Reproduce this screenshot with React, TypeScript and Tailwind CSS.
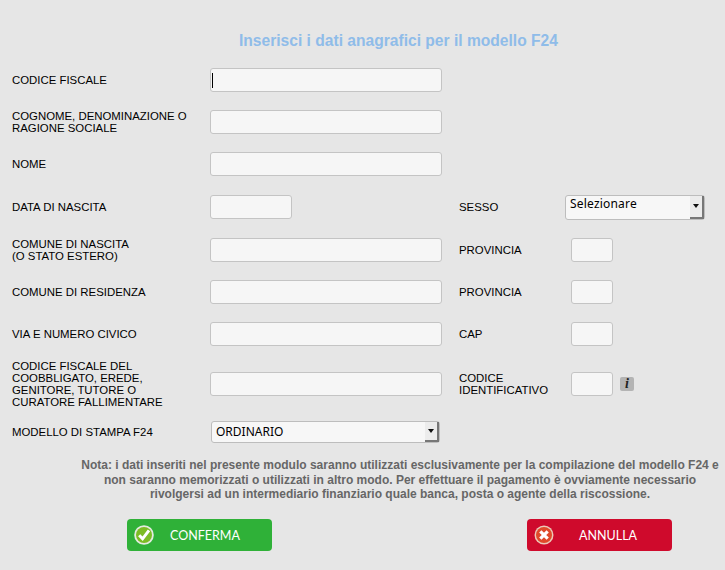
const Label = ({ children, className = "" }: { children: React.ReactNode; className?: string }) => (
  <div className={"text-[11.4px] leading-[12px] text-black " + className}>{children}</div>
);

const Field = ({ width }: { width: string }) => (
  <div className={"h-6 rounded-[3px] border border-[#c4c4c4] bg-[#f6f6f6] " + width} />
);

const SelectBox = ({ text, className, textClass }: { text: string; className: string; textClass: string }) => (
  <div className={"flex rounded-[3px] border border-[#bdbdbd] bg-[#f7f7f7] " + className}>
    <span className={"flex-1 pl-1 text-black font-['Noto_Sans','DejaVu_Sans',sans-serif] " + textClass}>{text}</span>
    <span className="flex w-3.5 items-center justify-center border-r-2 border-b-2 border-[#777] bg-[#ececec]">
      <svg width="6" height="4" viewBox="0 0 6 4"><path d="M0 0h6L3 4z" fill="#111" /></svg>
    </span>
  </div>
);

const Row = ({
  label,
  main = "w-[232px]",
  className = "",
  children,
}: {
  label: React.ReactNode;
  main?: string;
  className?: string;
  children?: React.ReactNode;
}) => (
  <div className={"flex h-6 items-center " + className}>
    <Label className="w-[198px] shrink-0">{label}</Label>
    <Field width={main} />
    {children}
  </div>
);

const Side = ({ label, info }: { label: React.ReactNode; info?: boolean }) => (
  <div className="flex items-center">
    <Label className="ml-[17px] w-[112px]">{label}</Label>
    <Field width="w-[42px]" />
    {info && (
      <span className="ml-[7px] flex h-[14px] w-[14px] items-center justify-center rounded-[2px] bg-[#b4b4b4] font-['Liberation_Serif',serif] text-[14px] font-bold italic leading-none text-[#222]">
        i
      </span>
    )}
  </div>
);

export default function App() {
  return (
    <div className="h-[570px] w-[725px] overflow-hidden bg-[#e6e6e6] font-['Liberation_Sans',Arial,sans-serif]">
      <h1 className="pt-[32px] pl-[239px] text-[15.6px] font-bold leading-[18px] text-[#8fbce9]">
        Inserisci i dati anagrafici per il modello F24
      </h1>
      <div className="pl-3">
        <div className="relative mt-[18px] flex h-6 items-center">
          <Label className="w-[198px] shrink-0">CODICE FISCALE</Label>
          <Field width="w-[232px]" />
          <span className="absolute left-[200px] top-[5px] h-[15px] w-px bg-black" />
        </div>
        <Row className="mt-[18px]" label={<>COGNOME, DENOMINAZIONE O<br />RAGIONE SOCIALE</>} />
        <Row className="mt-[18px]" label="NOME" />
        <Row className="mt-[19px]" label="DATA DI NASCITA" main="w-[82px]">
          <Label className="ml-[167px] w-[106px]">SESSO</Label>
          <SelectBox text="Selezionare" className="h-[25px] w-[140px]" textClass="text-[12px] leading-[15px] tracking-[0.2px]" />
        </Row>
        <Row className="mt-[19px]" label={<>COMUNE DI NASCITA<br />(O STATO ESTERO)</>}>
          <Side label="PROVINCIA" />
        </Row>
        <Row className="mt-[18px]" label="COMUNE DI RESIDENZA">
          <Side label="PROVINCIA" />
        </Row>
        <Row className="mt-[18px]" label="VIA E NUMERO CIVICO">
          <Side label="CAP" />
        </Row>
        <Row
          className="mt-[26px]"
          label={<>CODICE FISCALE DEL<br />COOBBLIGATO, EREDE,<br />GENITORE, TUTORE O<br />CURATORE FALLIMENTARE</>}
        >
          <Side label={<>CODICE<br />IDENTIFICATIVO</>} info />
        </Row>
        <div className="mt-[25px] flex h-[22px] items-center">
          <Label className="w-[199px] shrink-0">MODELLO DI STAMPA F24</Label>
          <SelectBox text="ORDINARIO" className="h-[22px] w-[229px]" textClass="text-[12px] leading-[19px]" />
        </div>
      </div>
      <p className="ml-[80px] mt-[15px] w-[640px] text-center text-[12px] font-bold leading-[14.5px] text-[#666666]">
        Nota: i dati inseriti nel presente modulo saranno utilizzati esclusivamente per la compilazione del modello F24 e
        <br />
        non saranno memorizzati o utilizzati in altro modo. Per effettuare il pagamento è ovviamente necessario
        <br />
        rivolgersi ad un intermediario finanziario quale banca, posta o agente della riscossione.
      </p>
      <div className="mt-[17px] flex pl-[127px]">
        <button className="flex h-8 w-[145px] items-center rounded-[4px] bg-[#2fb138] pl-[7px] font-['Lato',sans-serif] text-[12.5px] text-white">
          <svg width="20" height="20" viewBox="0 0 20 20" className="shrink-0">
            <circle cx="10" cy="10" r="9.8" fill="#e4ebe0" />
            <circle cx="10" cy="10" r="8" fill="#7cbc24" />
            <path d="M5.2 10.2l3.4 3.6 6.4-8.4" fill="none" stroke="#fff" strokeWidth="3" />
          </svg>
          <span className="ml-[16px] pt-[3px]">CONFERMA</span>
        </button>
        <button className="ml-[255px] flex h-8 w-[145px] items-center rounded-[4px] bg-[#cf0a2c] pl-[7px] font-['Lato',sans-serif] text-[12.5px] text-white">
          <svg width="20" height="20" viewBox="0 0 20 20" className="shrink-0">
            <circle cx="10" cy="10" r="9.5" fill="#ecc9b8" />
            <circle cx="10" cy="10" r="8" fill="#e0492a" />
            <path d="M6.3 6.3l7.4 7.4M13.7 6.3l-7.4 7.4" fill="none" stroke="#fff" strokeWidth="3.2" />
          </svg>
          <span className="ml-[25px] pt-[3px]">ANNULLA</span>
        </button>
      </div>
    </div>
  );
}
